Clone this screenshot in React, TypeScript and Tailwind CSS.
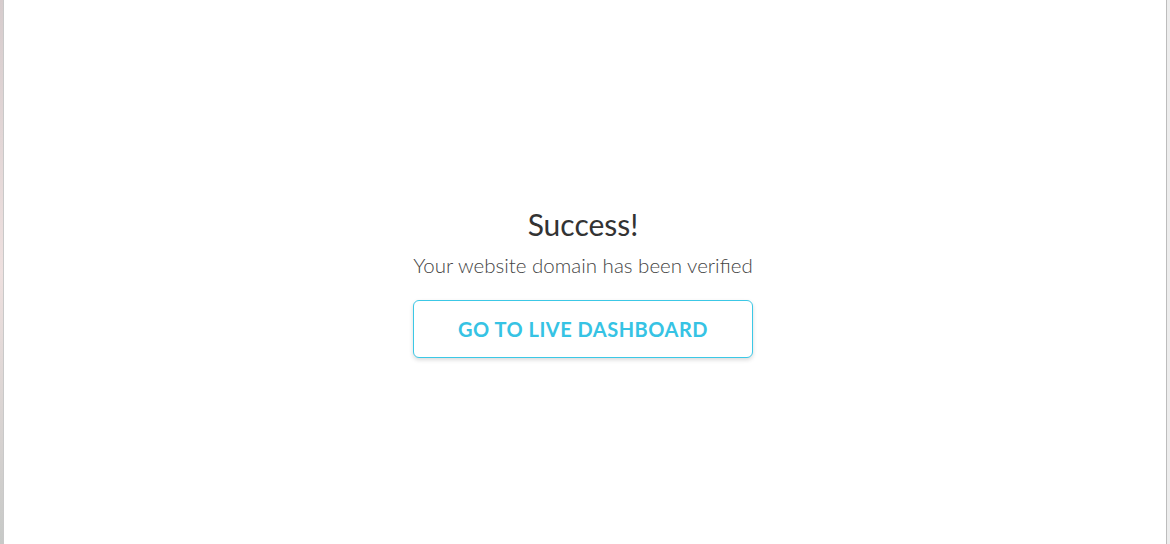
export default function App() {
  return (
    <div className="flex h-[544px] w-full bg-white" style={{ fontFamily: "Lato, 'Open Sans', sans-serif" }}>
      <div className="w-[3px] bg-gradient-to-b from-[#d6cccd] via-[#eee0df] to-[#c7c9c7]" />
      <div className="w-px bg-[#c9c9c9]" />
      <main className="flex flex-1 flex-col items-center pt-[205px] pr-[4px]">
        <h1 className="text-[30px] leading-[38px] font-normal text-[#333]">Success!</h1>
        <p className="mt-[8px] text-[20.5px] leading-[28px] font-light text-[#444]">
          Your website domain has been verified
        </p>
        <button className="mt-[21px] h-[58px] w-[340px] rounded-[6px] border border-[#3cc8e6] bg-white text-[20px] font-bold tracking-[0.5px] text-[#36c3e4] shadow-[0_2px_4px_rgba(0,0,0,0.15)]">
          GO TO LIVE DASHBOARD
        </button>
      </main>
      <div className="w-px bg-[#bdbdbd]" />
      <div className="w-[3px] bg-[#ededed]" />
    </div>
  );
}
